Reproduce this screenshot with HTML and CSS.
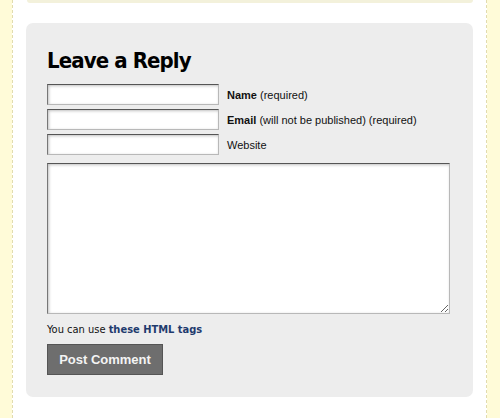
FILE: index.html
```html
<!DOCTYPE html>
<html lang="en">
<head>
  <meta charset="UTF-8">
  <title>Leave a Reply</title>
  <link rel="stylesheet" href="styles.css">
</head>
<body>
  <div class="page">
    <div class="post-end"></div>

    <div id="respond" class="respond">
      <h3>Leave a Reply</h3>
      <form class="comment-form">
        <p class="field">
          <input type="text" id="author">
          <label for="author"><strong>Name</strong> (required)</label>
        </p>
        <p class="field">
          <input type="text" id="email">
          <label for="email"><strong>Email</strong> (will not be published) (required)</label>
        </p>
        <p class="field">
          <input type="text" id="url">
          <label for="url">Website</label>
        </p>
        <textarea id="comment"></textarea>
        <p class="tags">You can use <a href="#">these HTML tags</a></p>
        <button type="submit">Post Comment</button>
      </form>
    </div>
  </div>
</body>
</html>
```

FILE: styles.css
```css
html, body {
  margin: 0;
  height: 100%;
}
body {
  background-color: #fffbd8;
  font-family: "Liberation Sans", Arial, sans-serif;
  color: #222;
}
.page {
  margin: 0 13px 0 12px;
  min-height: 100%;
  background-color: #fff;
  border-left: 1px dashed #e2dcae;
  border-right: 1px dashed #e2dcae;
  padding: 0 13px;
}
.post-end {
  height: 3px;
  margin-left: 1px;
  background-color: #f3f1db;
  border-radius: 0 0 4px 4px;
}
.respond {
  margin-top: 20px;
  background-color: #ededed;
  border-radius: 7px;
  padding: 24px 22px 22px 21px;
}
.respond h3 {
  margin: 0 0 9px;
  font-family: "DejaVu Sans Condensed", "DejaVu Sans", Tahoma, sans-serif;
  font-size: 22px;
  line-height: 28px;
  letter-spacing: -0.9px;
  color: #000;
}
.field {
  display: flex;
  align-items: center;
  margin: 0 0 4px;
  font-size: 11px;
}
.field input {
  width: 172px;
  height: 21px;
  box-sizing: border-box;
  margin: 0 8px 0 0;
  border: 1px solid #b8b8b8;
  border-top-color: #555;
  border-left-color: #777;
  box-shadow: inset 1px 1px 3px rgba(0, 0, 0, 0.25);
  background-color: #fff;
}
.field label {
  color: #111;
}
textarea {
  display: block;
  width: 403px;
  height: 151px;
  box-sizing: border-box;
  margin: 8px 0 0;
  border: 1px solid #b8b8b8;
  border-top-color: #555;
  border-left-color: #777;
  box-shadow: inset 1px 1px 3px rgba(0, 0, 0, 0.25);
  background-color: #fff;
}
.tags {
  margin: 9px 0 8px;
  font-family: "DejaVu Sans Condensed", "DejaVu Sans", Tahoma, sans-serif;
  font-size: 11px;
  color: #111;
}
.tags a {
  color: #1f3b6e;
  font-weight: bold;
  text-decoration: none;
}
button {
  width: 116px;
  height: 31px;
  background-color: #6e6e6e;
  border: 1px solid #555;
  color: #f4f4f4;
  font-family: "Liberation Sans", Arial, sans-serif;
  font-weight: bold;
  font-size: 13px;
  padding: 0;
}
```
